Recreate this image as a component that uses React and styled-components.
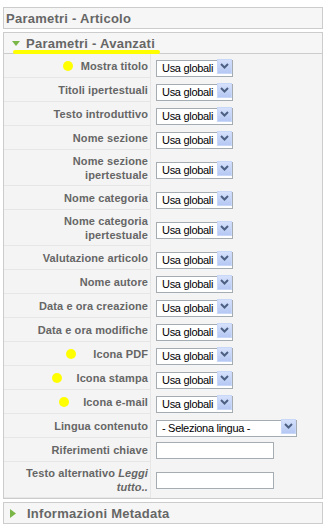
import React from "react";
import styled, { createGlobalStyle } from "styled-components";

const GlobalStyle = createGlobalStyle`
  html, body { margin: 0; padding: 0; background: #fff; }
  body { font-family: "Liberation Sans", Arial, sans-serif; }
  * { box-sizing: border-box; }
`;

const Wrapper = styled.div`
  width: 323px;
  padding: 7px 0 0 3px;
`;

const Panel = styled.div`
  border: 1px solid #ccc;
  background: #f4f4f4;
  margin-bottom: 3px;
`;

const PanelTitle = styled.h3`
  position: relative;
  margin: 0;
  height: ${(p) => (p.$open ? 21 : 20)}px;
  padding-left: ${(p) => p.$indent}px;
  display: flex;
  align-items: center;
  gap: ${(p) => p.$gap || 0}px;
  font-size: 13px;
  font-weight: bold;
  letter-spacing: 0.25px;
  color: #666;
  background: #f6f6f6;
  border-bottom: ${(p) => (p.$open ? "1px solid #ccc" : "none")};
  white-space: nowrap;
`;

const Marker = styled.span`
  position: absolute;
  left: 9px;
  top: 17px;
  width: 147px;
  height: 4px;
  border-radius: 2px;
  background: #ffff00;
`;

const Toggle = styled.svg`
  flex: none;
  display: block;
`;

const Rows = styled.div`
  display: flex;
  flex-direction: column;
`;

const Row = styled.div`
  display: flex;
  height: ${(p) => (p.$tall ? 36 : 24)}px;
`;

const Key = styled.div`
  width: 147px;
  flex: none;
  display: flex;
  align-items: center;
  justify-content: flex-end;
  text-align: right;
  padding-right: 2px;
  background: #f4f4f4;
  border-bottom: 1px solid #e6e6e6;
  border-right: 1px solid #e6e6e6;
  font-size: 11px;
  line-height: 14px;
  font-weight: bold;
  letter-spacing: 0.1px;
  color: #666;
`;

const KeyText = styled.span`
  position: relative;
  display: inline-block;
`;

const Dot = styled.span`
  position: absolute;
  top: 50%;
  right: calc(100% + ${(p) => p.$gap}px);
  width: 10px;
  height: 10px;
  margin-top: -5px;
  border-radius: 50%;
  background: #ffff00;
`;

const Value = styled.div`
  flex: 1;
  display: flex;
  align-items: center;
  padding-left: 5px;
`;

const SelectWrap = styled.span`
  position: relative;
  display: inline-block;
  width: ${(p) => p.$w}px;
  height: 17px;
`;

const NativeSelect = styled.select`
  appearance: none;
  -webkit-appearance: none;
  width: 100%;
  height: 17px;
  margin: 0;
  padding: 0 0 0 5px;
  border: 1px solid #a5acb2;
  border-radius: 0;
  background: #fff;
  color: #000;
  font-family: "Liberation Sans", Arial, sans-serif;
  font-size: 11px;
  letter-spacing: -0.3px;
  line-height: 15px;
  outline: none;
`;

const Arrow = styled.span`
  position: absolute;
  top: 1px;
  right: 1px;
  width: 15px;
  height: 15px;
  display: flex;
  align-items: center;
  justify-content: center;
  background: linear-gradient(#d6e1fb, #b5c8f3);
  border: 1px solid #c9d7f8;
  pointer-events: none;
`;

const TextInput = styled.input`
  width: 118px;
  height: 17px;
  margin: 0;
  padding: 0 3px;
  border: 1px solid #a5acb2;
  border-radius: 0;
  background: #fff;
  font-family: "Liberation Sans", Arial, sans-serif;
  font-size: 11px;
  outline: none;
`;

const Chevron = () => (
  <svg width="9" height="6" viewBox="0 0 9 6">
    <path d="M1 1 L4.5 4.5 L8 1" fill="none" stroke="#4d6185" strokeWidth="2" />
  </svg>
);

const Select = ({ w, label }) => (
  <SelectWrap $w={w}>
    <NativeSelect defaultValue="a">
      <option value="a">{label}</option>
    </NativeSelect>
    <Arrow>
      <Chevron />
    </Arrow>
  </SelectWrap>
);

const rows = [
  { lines: ["Mostra titolo"], dot: 8 },
  { lines: ["Titoli ipertestuali"] },
  { lines: ["Testo introduttivo"] },
  { lines: ["Nome sezione"] },
  { lines: ["Nome sezione", "ipertestuale"] },
  { lines: ["Nome categoria"] },
  { lines: ["Nome categoria", "ipertestuale"] },
  { lines: ["Valutazione articolo"] },
  { lines: ["Nome autore"] },
  { lines: ["Data e ora creazione"] },
  { lines: ["Data e ora modifiche"] },
  { lines: ["Icona PDF"], dot: 17 },
  { lines: ["Icona stampa"], dot: 14 },
  { lines: ["Icona e-mail"], dot: 14 },
  { lines: ["Lingua contenuto"], field: "lang" },
  { lines: ["Riferimenti chiave"], field: "input" },
  { alt: true, field: "input" },
];

const renderLabel = (r) => {
  if (r.alt) {
    return (
      <>
        Testo alternativo <i>Leggi</i>
        <br />
        <i>tutto..</i>
      </>
    );
  }
  return r.lines.map((l, i) => (
    <React.Fragment key={i}>
      {i > 0 && <br />}
      {l}
    </React.Fragment>
  ));
};

const renderField = (r) => {
  if (r.field === "lang") return <Select w={141} label="- Seleziona lingua -" />;
  if (r.field === "input") return <TextInput type="text" defaultValue="" />;
  return <Select w={77} label="Usa globali" />;
};

export default function App() {
  return (
    <>
      <GlobalStyle />
      <Wrapper>
        <Panel>
          <PanelTitle $indent={2}>Parametri - Articolo</PanelTitle>
        </Panel>
        <Panel>
          <PanelTitle $open $indent={8} $gap={6}>
            <Toggle width="8" height="5" viewBox="0 0 8 5">
              <path d="M0 0 H8 L4 5 Z" fill="#7ab648" />
            </Toggle>
            Parametri - Avanzati
            <Marker />
          </PanelTitle>
          <Rows>
            {rows.map((r, i) => (
              <Row key={i} $tall={r.alt || r.lines.length > 1}>
                <Key>
                  <KeyText>
                    {r.dot !== undefined && <Dot $gap={r.dot} />}
                    {renderLabel(r)}
                  </KeyText>
                </Key>
                <Value>{renderField(r)}</Value>
              </Row>
            ))}
          </Rows>
        </Panel>
        <Panel>
          <PanelTitle $indent={6} $gap={11}>
            <Toggle width="6" height="9" viewBox="0 0 6 9">
              <path d="M0 0 V9 L6 4.5 Z" fill="#7ab648" />
            </Toggle>
            Informazioni Metadata
          </PanelTitle>
        </Panel>
      </Wrapper>
    </>
  );
}
